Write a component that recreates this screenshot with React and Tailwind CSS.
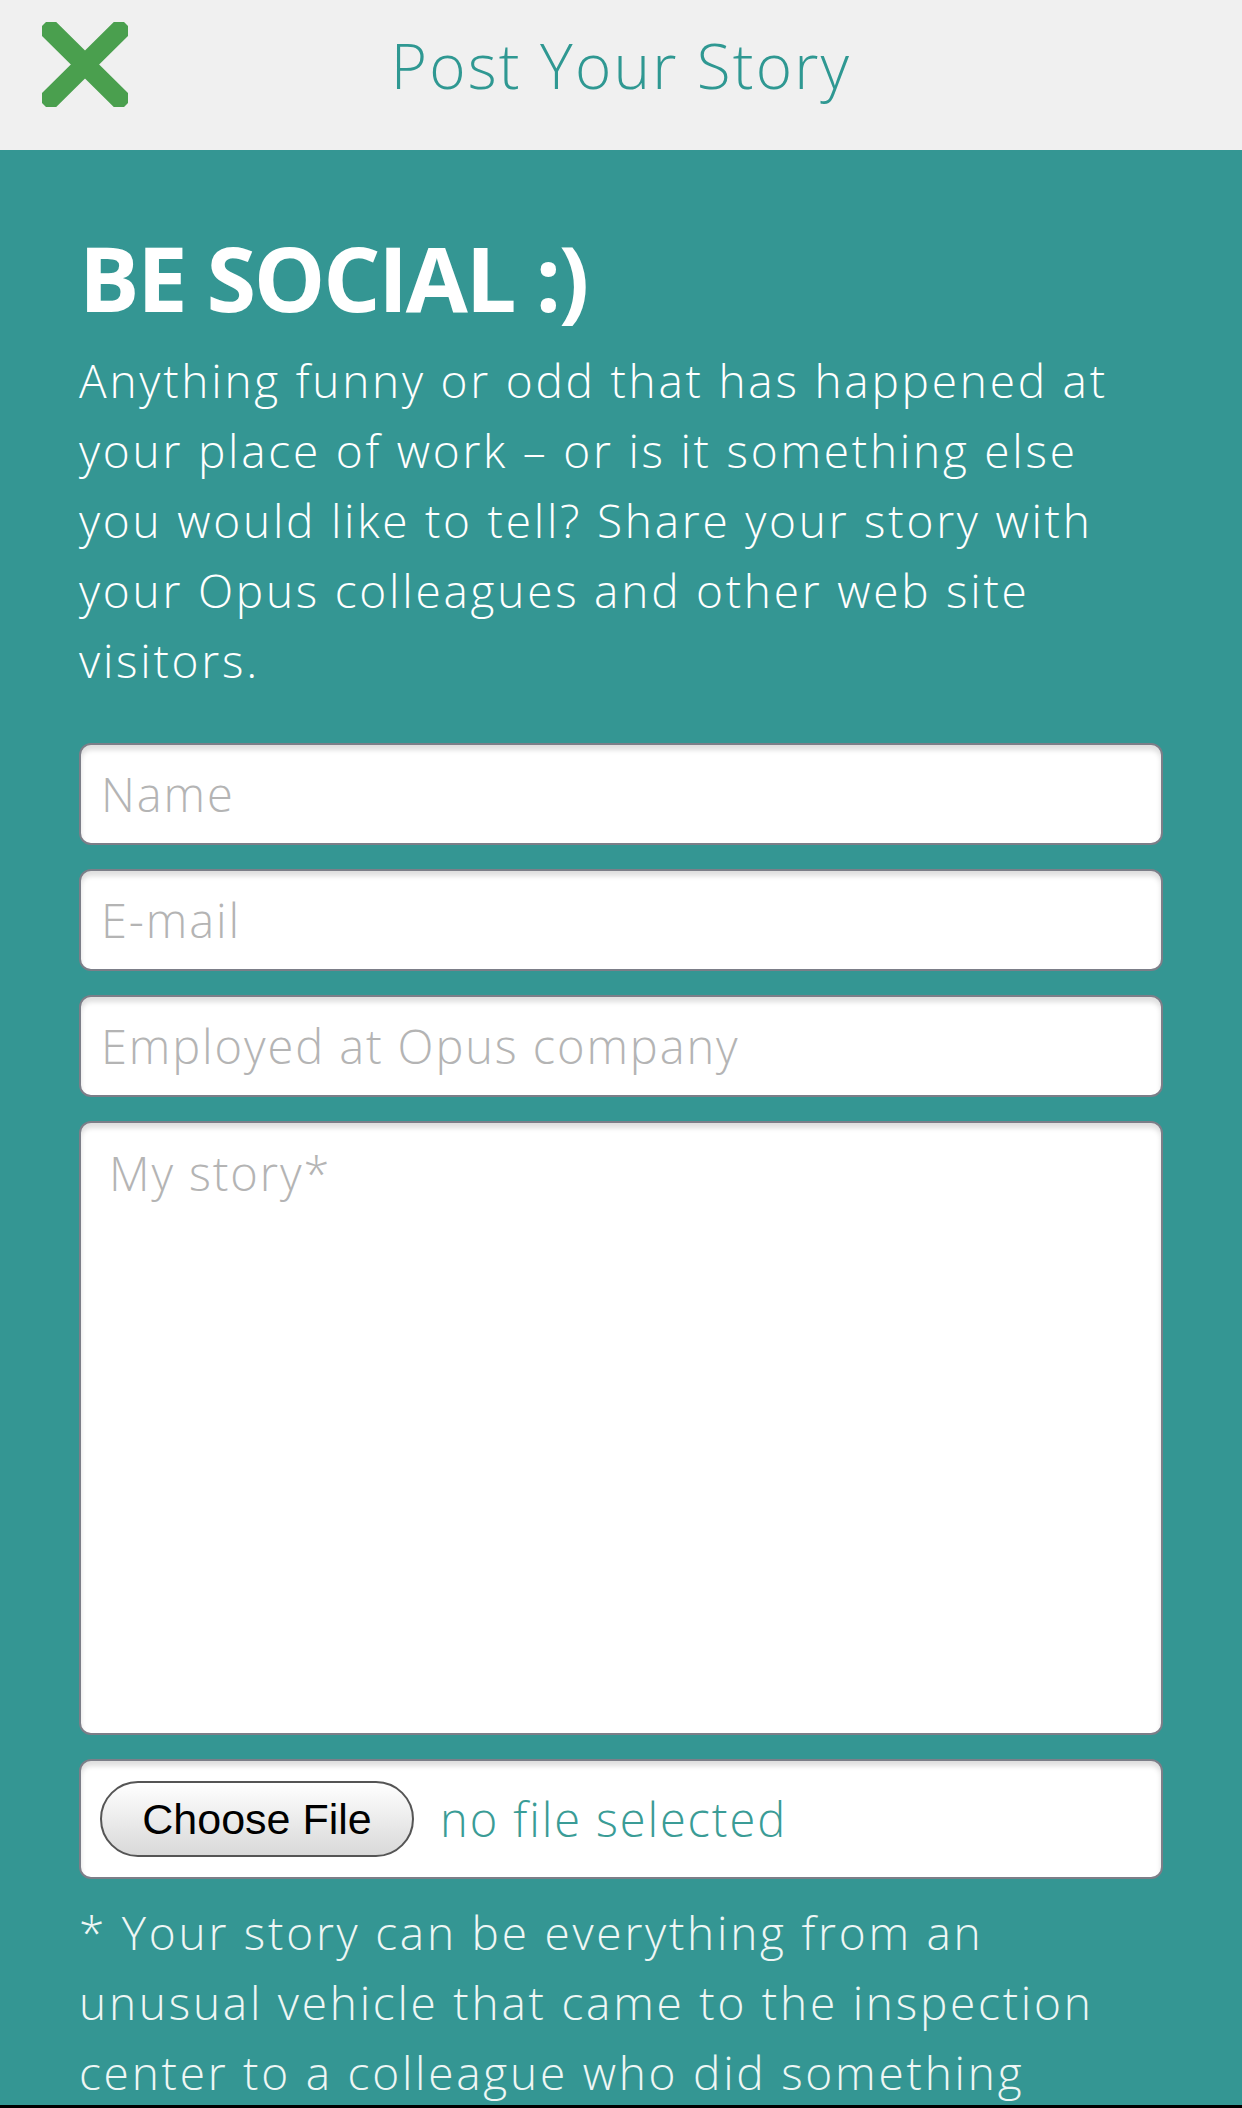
import React from 'react';

const CloseIcon = () => (
  <svg viewBox="0 0 86 85" className="w-[86px] h-[85px]">
    <path d="M2 2 L84 83 M84 2 L2 83" stroke="#4a9f4e" strokeWidth="20" strokeLinecap="butt" fill="none" />
  </svg>
);

const fieldBox =
  'w-full bg-white border-2 border-[#7c7e88] rounded-[12px] shadow-[inset_0_5px_5px_rgba(0,0,0,0.13)] outline-none';

const inputText = 'text-[47px] tracking-[0.04em] font-light text-[#444] placeholder:text-[#b4b4b4]';

const App = () => {
  return (
    <div className="h-[2108px] flex flex-col overflow-hidden font-['Open_Sans',sans-serif] bg-[#349693]">
      {/* Top bar */}
      <header className="relative h-[150px] shrink-0 bg-[#f0f0f0] flex justify-center">
        <button className="absolute left-[42px] top-[22px]">
          <CloseIcon />
        </button>
        <h1 className="pt-[34px] text-[62px] leading-[62px] font-light tracking-[0.035em] text-[#2f9892]">
          Post Your Story
        </h1>
      </header>

      {/* Form area */}
      <main className="flex-1 overflow-hidden px-[79px] pt-[77px]">
        <h2 className="text-[90px] leading-[100px] font-bold tracking-tight text-white">BE SOCIAL :)</h2>
        <p className="mt-[18px] text-[46px] leading-[70px] font-light tracking-[0.06em] text-white">
          Anything funny or odd that has happened at your place of work – or is it something else you would
          like to tell? Share your story with your Opus colleagues and other web site visitors.
        </p>

        <form className="mt-[48px] flex flex-col gap-[24px]">
          <input type="text" placeholder="Name" className={`${fieldBox} h-[102px] px-[20px] ${inputText}`} />
          <input type="email" placeholder="E-mail" className={`${fieldBox} h-[102px] px-[20px] ${inputText}`} />
          <input
            type="text"
            placeholder="Employed at Opus company"
            className={`${fieldBox} h-[102px] px-[20px] ${inputText}`}
          />
          <textarea
            placeholder="My story*"
            className={`${fieldBox} h-[614px] resize-none px-[28px] pt-[22px] leading-[56px] ${inputText}`}
          />
          <div className={`${fieldBox} h-[120px] flex items-center px-[19px] gap-[26px]`}>
            <span className="h-[76px] w-[314px] shrink-0 flex items-center justify-center rounded-full border-2 border-[#555] bg-gradient-to-b from-white to-[#d9d9d9] font-['Liberation_Sans',Arial,sans-serif] text-[43px] text-black">
              Choose File
            </span>
            <span className="text-[47px] font-light tracking-[0.04em] text-[#3a9c96]">no file selected</span>
          </div>
        </form>

        <p className="mt-[18px] text-[46px] leading-[70px] font-light tracking-[0.06em] text-[#eef6f5]">
          * Your story can be everything from an unusual vehicle that came to the inspection center to a
          colleague who did something
        </p>
      </main>

      <div className="h-[3px] shrink-0 bg-black" />
    </div>
  );
};

export default App;
